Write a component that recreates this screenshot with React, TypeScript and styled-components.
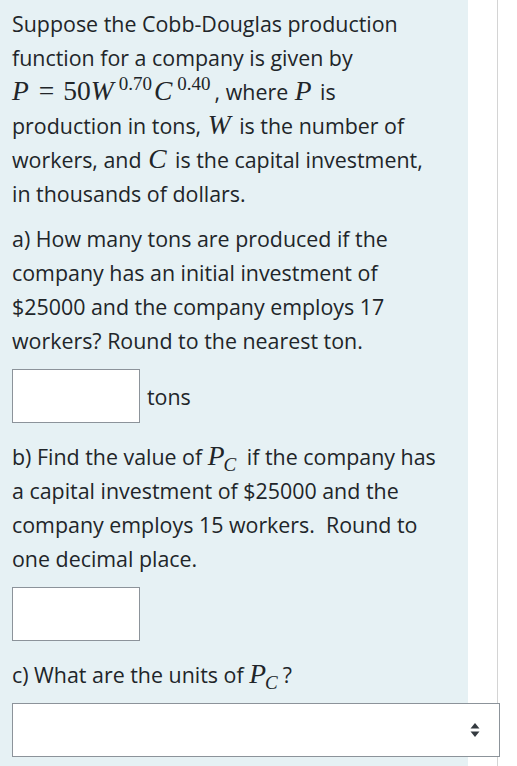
import styled, { createGlobalStyle } from 'styled-components'

const GlobalStyle = createGlobalStyle`
  body {
    margin: 0;
    background: #ffffff;
    font-family: "Open Sans", "Noto Sans", sans-serif;
    color: #212529;
  }
`

function App(): JSX.Element {
  return (
    <>
      <GlobalStyle />
      <Page>
        <Panel>
          <Para>
            Suppose the Cobb-Douglas production function for a company is given by{' '}
            <Math>
              <Var>P</Var>
              <Op>=</Op>
              <Num>50</Num>
              <Var>W</Var>
              <Sup>0.70</Sup>
              <Var>C</Var>
              <Sup>0.40</Sup>
            </Math>
            , where <Math><Var>P</Var></Math> is production in tons, <Math><Var>W</Var></Math> is the
            number of workers, and <Math><Var>C</Var></Math> is the capital investment, in thousands of
            dollars.
          </Para>

          <Para>
            a) How many tons are produced if the company has an initial investment of $25000 and the
            company employs 17 workers? Round to the nearest ton.
          </Para>
          <AnswerRow>
            <TextBox type="text" />
            <Unit>tons</Unit>
          </AnswerRow>

          <Para>
            b) Find the value of{' '}
            <Math>
              <Var>P</Var>
              <Sub>C</Sub>
            </Math>{' '}
            if the company has a capital investment of $25000 and the company employs 15 workers.&nbsp;
            Round to one decimal place.
          </Para>
          <AnswerRow>
            <TextBox type="text" />
          </AnswerRow>

          <Para>
            c) What are the units of{' '}
            <Math>
              <Var>P</Var>
              <Sub>C</Sub>
            </Math>
            ?
          </Para>
          <SelectWrap>
            <Select defaultValue="">
              <option value=""></option>
            </Select>
            <Arrows width="10" height="16" viewBox="0 0 10 16">
              <path d="M5 1 L9.5 6.5 H0.5 Z" fill="#343a40" />
              <path d="M5 15 L9.5 9.5 H0.5 Z" fill="#343a40" />
            </Arrows>
          </SelectWrap>
        </Panel>
        <Divider />
      </Page>
    </>
  )
}

const Page = styled.div`
  display: flex;
  align-items: stretch;
  min-height: 766px;
`

const Panel = styled.div`
  width: 468px;
  flex-shrink: 0;
  box-sizing: border-box;
  padding: 7px 27px 10px 12px;
  background: #e6f1f4;
`

const Divider = styled.div`
  width: 1px;
  margin-left: 29px;
  background: #d4d4d4;
`

const Para = styled.p`
  margin: 0 0 11px;
  font-size: 21.4px;
  line-height: 34px;
`

const Math = styled.span`
  font-family: "Liberation Serif", "DejaVu Serif", serif;
  font-size: 27.5px;
  line-height: 0;
  padding: 0 2px 0 1px;
  white-space: nowrap;
  &:first-child {
    padding-left: 0;
  }
`

const Var = styled.i`
  font-style: italic;
  padding-right: 1px;
`

const Num = styled.span`
  font-style: normal;
`

const Op = styled.span`
  margin: 0 9px;
`

const Sup = styled.sup`
  font-size: 19px;
  vertical-align: 10px;
  line-height: 0;
  margin-left: 4px;
  margin-right: 2px;
`

const Sub = styled.sub`
  font-size: 19px;
  font-style: italic;
  vertical-align: -6px;
  line-height: 0;
  margin-left: -2px;
  margin-right: 3px;
`

const AnswerRow = styled.div`
  display: flex;
  align-items: center;
  gap: 7px;
  margin-bottom: 17px;
`

const TextBox = styled.input`
  width: 128px;
  height: 54px;
  box-sizing: border-box;
  margin: 0;
  border: 1px solid #8c939a;
  background: #ffffff;
  border-radius: 0;
`

const Unit = styled.span`
  font-size: 21.4px;
`

const SelectWrap = styled.div`
  position: relative;
  z-index: 1;
  width: 488px;
`

const Select = styled.select`
  display: block;
  width: 100%;
  height: 54px;
  margin: 0;
  box-sizing: border-box;
  border: 1px solid #8c939a;
  border-radius: 0;
  background: #ffffff;
  appearance: none;
`

const Arrows = styled.svg`
  position: absolute;
  right: 20px;
  top: 19px;
  pointer-events: none;
`

export default App
